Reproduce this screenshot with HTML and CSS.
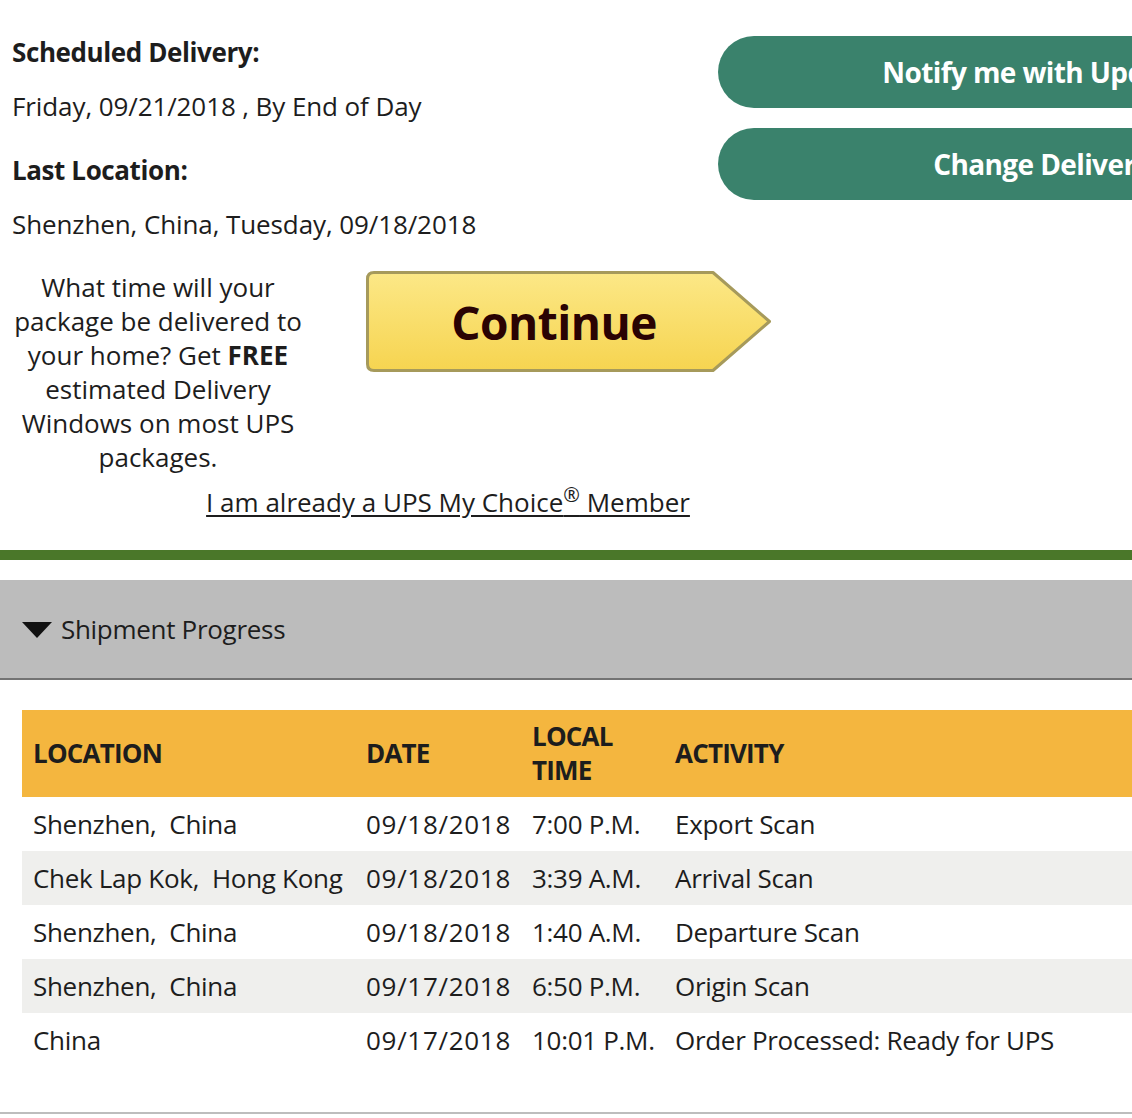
FILE: index.html
```html
<!DOCTYPE html>
<html lang="en">
<head>
<meta charset="utf-8">
<title>Tracking</title>
<link rel="stylesheet" href="styles.css">
</head>
<body>
<div class="page">
  <div class="summary">
    <div class="info">
      <div class="label">Scheduled Delivery:</div>
      <div class="value">Friday, 09/21/2018 , By End of Day</div>
      <div class="label">Last Location:</div>
      <div class="value">Shenzhen, China, Tuesday, 09/18/2018</div>
    </div>
    <div class="actions">
      <a class="pill" href="#">Notify me with Updates</a>
      <a class="pill" href="#">Change Delivery</a>
    </div>
  </div>

  <div class="promo">
    <p class="promo-text">What time will your package be delivered to your home? Get <b>FREE</b> estimated Delivery Windows on most UPS packages.</p>
    <a class="continue" href="#">
      <svg class="continue-bg" viewBox="0 0 406 101" width="406" height="101" aria-hidden="true">
        <defs>
          <linearGradient id="yg" x1="0" y1="0" x2="0" y2="1">
            <stop offset="0" stop-color="#fce887"/>
            <stop offset="1" stop-color="#f6d450"/>
          </linearGradient>
        </defs>
        <path d="M8 1.5 H347 L403.5 50.5 L347 99.5 H8 Q1.5 99.5 1.5 93 V8 Q1.5 1.5 8 1.5 Z" fill="url(#yg)" stroke="#a69a5b" stroke-width="3" stroke-linejoin="round"/>
      </svg>
      <span class="continue-label">Continue</span>
    </a>
  </div>

  <div class="member">
    <a href="#">I am already a UPS My Choice<sup>®</sup> Member</a>
  </div>

  <div class="rule"></div>

  <div class="progress-bar">
    <span class="caret"></span>
    <span>Shipment Progress</span>
  </div>

  <table class="activity">
    <colgroup>
      <col class="c-loc">
      <col class="c-date">
      <col class="c-time">
      <col>
    </colgroup>
    <thead>
      <tr>
        <th>LOCATION</th>
        <th>DATE</th>
        <th>LOCAL<br>TIME</th>
        <th>ACTIVITY</th>
      </tr>
    </thead>
    <tbody>
      <tr><td>Shenzhen,&nbsp; China</td><td class="num">09/18/2018</td><td>7:00 P.M.</td><td>Export Scan</td></tr>
      <tr><td>Chek Lap Kok,&nbsp; Hong Kong</td><td class="num">09/18/2018</td><td>3:39 A.M.</td><td>Arrival Scan</td></tr>
      <tr><td>Shenzhen,&nbsp; China</td><td class="num">09/18/2018</td><td>1:40 A.M.</td><td>Departure Scan</td></tr>
      <tr><td>Shenzhen,&nbsp; China</td><td class="num">09/17/2018</td><td>6:50 P.M.</td><td>Origin Scan</td></tr>
      <tr><td>China</td><td class="num">09/17/2018</td><td>10:01 P.M.</td><td>Order Processed: Ready for UPS</td></tr>
    </tbody>
  </table>

  <div class="bottom-rule"></div>
</div>
</body>
</html>
```

FILE: styles.css
```css
html, body {
  margin: 0;
  padding: 0;
  background: #ffffff;
}

body {
  overflow: hidden;
  font-family: "Open Sans", "Noto Sans", "Liberation Sans", sans-serif;
  color: #1d1d1d;
  font-size: 26px;
}

.page {
  width: 1132px;
  overflow: hidden;
}

.summary {
  display: flex;
  align-items: flex-start;
}

.info {
  width: 718px;
  flex: none;
  padding: 35px 0 0 12px;
  box-sizing: border-box;
}

.label {
  font-weight: 700;
  line-height: 34px;
  letter-spacing: -0.4px;
  margin-bottom: 20px;
}

.value {
  line-height: 34px;
  letter-spacing: -0.1px;
  margin-bottom: 30px;
}

.value:last-child {
  margin-bottom: 0;
}

.actions {
  padding-top: 36px;
  display: flex;
  flex-direction: column;
  gap: 20px;
}

.pill {
  display: flex;
  align-items: center;
  justify-content: center;
  width: 648px;
  height: 72px;
  border-radius: 36px;
  background: #3a826c;
  color: #ffffff;
  text-decoration: none;
  font-weight: 700;
  font-size: 28px;
  letter-spacing: -0.6px;
}

.promo {
  display: flex;
  align-items: flex-start;
  margin-top: 29px;
}

.promo-text {
  margin: 0 0 0 8px;
  width: 300px;
  text-align: center;
  line-height: 34px;
  letter-spacing: 0;
}

.promo-text b {
  font-weight: 700;
}

.continue {
  position: relative;
  display: flex;
  align-items: center;
  justify-content: center;
  width: 406px;
  height: 101px;
  margin: 1px 0 0 58px;
  padding-right: 30px;
  box-sizing: border-box;
  text-decoration: none;
}

.continue-bg {
  position: absolute;
  left: 0;
  top: 0;
}

.continue-label {
  position: relative;
  font-weight: 700;
  font-size: 46px;
  letter-spacing: -0.5px;
  color: #2a0303;
}

.member {
  width: 896px;
  text-align: center;
  margin-top: 11px;
  line-height: 34px;
}

.member a {
  color: #1d1d1d;
  text-decoration: underline;
  text-underline-offset: 3px;
  letter-spacing: 0;
}

.member sup {
  font-size: 20px;
  line-height: 0;
}

.rule {
  margin-top: 31px;
  height: 10px;
  background: #4a7729;
}

.progress-bar {
  margin-top: 20px;
  height: 98px;
  background: #bcbcbc;
  border-bottom: 2px solid #737373;
  display: flex;
  align-items: center;
  padding-left: 22px;
  gap: 9px;
  letter-spacing: -0.3px;
}

.caret {
  width: 0;
  height: 0;
  border-left: 15px solid transparent;
  border-right: 15px solid transparent;
  border-top: 16px solid #111111;
  margin-top: 2px;
}

.activity {
  margin: 30px 0 0 22px;
  width: 1140px;
  border-collapse: collapse;
  table-layout: fixed;
}

.c-loc { width: 333px; }
.c-date { width: 166px; }
.c-time { width: 143px; }

.activity th {
  background: #f4b63f;
  text-align: left;
  font-weight: 700;
  font-size: 26px;
  line-height: 34px;
  letter-spacing: -0.8px;
  padding: 9px 11px 10px;
  vertical-align: middle;
  color: #1d1d1d;
}

.activity td {
  height: 54px;
  padding: 0 11px;
  line-height: 34px;
  letter-spacing: -0.3px;
  white-space: nowrap;
  vertical-align: middle;
  box-sizing: border-box;
}

.activity td.num {
  letter-spacing: 0.7px;
}

.activity tbody tr:nth-child(even) td {
  background: #efefed;
}

.bottom-rule {
  margin-top: 45px;
  height: 2px;
  background: #bdbdbd;
}
```
